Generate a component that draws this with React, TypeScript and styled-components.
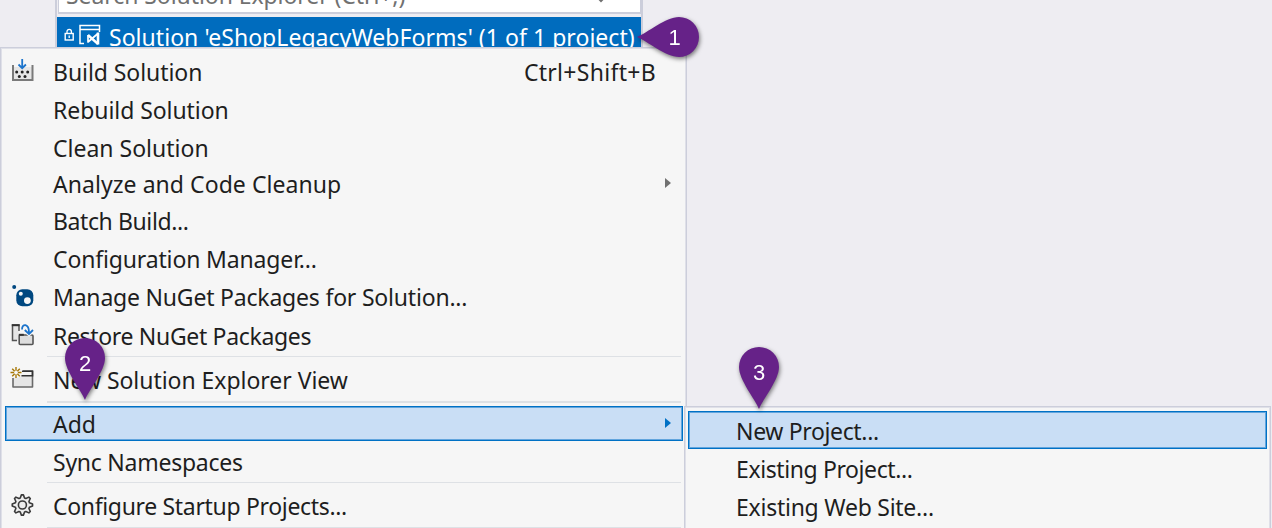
import React from 'react';
import styled, { createGlobalStyle } from 'styled-components';

const Global = createGlobalStyle`
  * { box-sizing: border-box; }
  body { margin: 0; background: #eeedf2; overflow: hidden; }
`;

const Stage = styled.main`
  position: relative;
  width: 1272px;
  height: 528px;
  overflow: hidden;
  background: #eeedf2;
  font-family: 'Noto Sans', 'Open Sans', sans-serif;
  font-size: 23px;
  color: #1e1e1e;
`;

const Explorer = styled.section`
  width: 588px;
  height: 47px;
  margin-left: 55px;
  border: solid #cccedb;
  border-width: 0 2px;
  overflow: hidden;
`;

const Search = styled.div`
  height: 14px;
  display: flex;
  align-items: flex-end;
  justify-content: space-between;
  padding: 0 33px 0 7px;
  margin-left: 1px;
  background: #fff;
  border: solid #cccedb;
  border-width: 0 1px 2px;
  color: #717171;
  line-height: 33px;
`;

const SolutionRow = styled.div`
  height: 41px;
  margin-top: 3px;
  padding-left: 7px;
  display: flex;
  background: #006cbe;
  color: #fff;
`;

const SolutionIcons = styled.svg`
  width: 40px;
  height: 30px;
  flex: none;
`;

const Label = styled.span<{ $ls?: number }>`
  white-space: pre;
  letter-spacing: ${p => p.$ls ?? -0.2}px;
`;

const SolutionLabel = styled(Label)`
  margin-left: 5px;
  line-height: 40px;
`;

const Menu = styled.ul`
  list-style: none;
  width: 687px;
  height: 490px;
  margin: 0;
  padding: 5px 3px 0 4px;
  background: #f6f6f6;
  border: solid #cccedb;
  border-width: 1px 1px 0;
  box-shadow: inset 1px 1px 0 #dfe0e8, inset -1px 0 0 #dfe0e8;
`;

const SubMenu = styled(Menu)`
  position: absolute;
  left: 684px;
  top: 406px;
  width: 587px;
  padding: 4px 3px 0;
`;

const Item = styled.li<{ $h: number; $active?: boolean; $drop?: number }>`
  height: ${p => p.$h}px;
  display: flex;
  align-items: center;
  position: relative;
  padding: ${p => p.$drop ?? 0}px 27px 0 48px;
  background: ${p => (p.$active ? '#c9def5' : 'transparent')};
  box-shadow: ${p => (p.$active ? 'inset 0 0 0 1px #0071c5, inset 0 0 0 2px #62a5dd' : 'none')};
`;

const Shortcut = styled(Label)`
  margin-left: auto;
`;

const Icon = styled.svg`
  position: absolute;
  left: 4px;
  top: 50%;
  width: 26px;
  height: 26px;
  margin-top: -15px;
`;

const Arrow = styled.i<{ $color: string }>`
  position: absolute;
  right: 12px;
  top: 50%;
  margin-top: -6px;
  border: solid transparent;
  border-width: 5px 0 5px 6px;
  border-left-color: ${p => p.$color};
`;

const Rule = styled.li<{ $h?: number; $top?: number; $gap?: number }>`
  height: ${p => p.$h ?? 1}px;
  margin: ${p => p.$top ?? 0}px 2px ${p => p.$gap ?? 0}px 42px;
  background: #dee1e5;
`;

const PinBox = styled.svg<{ $x: number; $y: number }>`
  position: absolute;
  left: ${p => p.$x}px;
  top: ${p => p.$y}px;
  width: 80px;
  height: 80px;
  overflow: visible;
  font-family: 'Liberation Sans', Arial, sans-serif;
  font-size: 22px;
  filter: drop-shadow(1px 2px 2px rgba(0, 0, 0, 0.5));
`;

function Pin({ x, y, n, side }: { x: number; y: number; n: number; side?: boolean }) {
  return (
    <PinBox $x={x - 40} $y={y - 40} viewBox="-40 -40 80 80">
      <path
        transform={side ? 'rotate(90)' : undefined}
        d="M0 42C-4 32-20 13-20 0A20 20 0 0 1 20 0C20 13 4 32 0 42Z"
        fill="#662288"
      />
      <text x={side ? -4.5 : 0} y={side ? 8 : 12.5} textAnchor="middle" fill="#fff">{n}</text>
    </PinBox>
  );
}

const BuildIcon = () => (
  <Icon viewBox="0 0 26 26" fill="none">
    <path d="M4 10h19.500v13H4z" fill="#e6e6e6" />
    <path d="M4 8v15h19.500V8" stroke="#7a7a7a" strokeWidth="2" />
    <path d="M13.200 2v9M9.500 7.500l3.700 3.700 3.700-3.700" stroke="#1c74cc" strokeWidth="1.800" />
    <g fill="#222">
      <circle cx="7.700" cy="15" r="1.500" /><circle cx="13.200" cy="15" r="1.500" /><circle cx="18.700" cy="15" r="1.500" />
      <circle cx="10.300" cy="19.500" r="1.500" /><circle cx="16" cy="19.500" r="1.500" />
    </g>
  </Icon>
);
const NugetIcon = () => (
  <Icon viewBox="0 0 26 26">
    <circle cx="5.200" cy="5" r="2" fill="#004880" />
    <rect x="7.300" y="7.300" width="17" height="17" rx="6" fill="#004880" />
    <circle cx="11.800" cy="11.800" r="2" fill="#f6f6f6" />
    <circle cx="18.400" cy="18.600" r="3.400" fill="#f6f6f6" />
  </Icon>
);
const RestoreIcon = () => (
  <Icon viewBox="0 0 26 26" fill="none">
    <path d="M3.500 4h6v15.500h-6z" fill="#e6e6e6" />
    <path d="M8 19.500H3.500V4h6.500v6" stroke="#555" strokeWidth="1.500" />
    <path d="M2.800 4.200h7.800" stroke="#333" strokeWidth="2" />
    <rect x="10.200" y="14" width="13.800" height="9.500" rx="1" fill="#ddd" stroke="#555" strokeWidth="1.600" />
    <path d="M9.800 13.800h5" stroke="#333" strokeWidth="2" />
    <path d="M13 8.500c0-6.500 7-6 7 3M15.800 9l4.200 4 4-4" stroke="#f6f6f6" strokeWidth="4" />
    <path d="M13 8.500c0-6.500 7-6 7 3M15.800 9l4.200 4 4-4" stroke="#1c74cc" strokeWidth="1.800" />
  </Icon>
);
const WindowIcon = () => (
  <Icon viewBox="0 0 26 26" fill="none">
    <rect x="4" y="11" width="19.500" height="12" fill="#e6e6e6" />
    <path d="M14 7h9.500v16H4v-9" stroke="#6a6a6a" strokeWidth="1.600" strokeLinejoin="round" />
    <path d="M13 7.200h10.500v4.500H12.500" stroke="#333" strokeWidth="1.600" />
    <circle cx="7" cy="8.500" r="5.500" fill="#f6f6f6" />
    <path d="M7 3v11M1.500 8.500h11M3.200 4.700l7.600 7.600M10.800 4.700l-7.600 7.600" stroke="#a77808" strokeWidth="1.400" />
    <circle cx="7" cy="8.500" r="1.900" fill="#f6f6f6" />
  </Icon>
);
const gear = Array.from({ length: 32 }, (_, i) => {
  const a = ((i - 0.5) * Math.PI) / 16;
  const r = i % 4 < 2 ? 10.2 : 7.4;
  return `${13.4 + r * Math.sin(a)},${15 - r * Math.cos(a)}`;
}).join(' ');
const GearIcon = () => (
  <Icon viewBox="0 0 26 26" fill="none" stroke="#3a3a3a" strokeWidth="1.600" strokeLinejoin="round">
    <polygon points={gear} fill="#eee" />
    <circle cx="13.400" cy="15" r="4" />
  </Icon>
);

export default function App() {
  return (
    <Stage>
      <Global />
      <Explorer>
        <Search>
          <Label $ls={-0.07}>Search Solution Explorer (Ctrl+;)</Label>
          <svg width="12" height="14" fill="none" stroke="#717171" strokeWidth="2"><path d="M1 -2L6 3l5-5" /></svg>
        </Search>
        <SolutionRow>
          <SolutionIcons viewBox="0 0 40 30" fill="none" stroke="#fff">
            <rect x="1.200" y="16.500" width="8" height="6.500" strokeWidth="1.400" />
            <path d="M3 16.500v-2a2.200 2.200 0 0 1 4.400 0v2M5.200 18.500v2.500" strokeWidth="1.300" />
            <path d="M20 26.500h-4V8.500h19.500V15M16 12.500h19.500" strokeWidth="1.500" />
            <path d="M24 18v7l10-8.500" strokeWidth="1.700" strokeLinejoin="round" />
            <path d="M24 18l10 9" strokeWidth="2.400" />
            <path d="M34 15.500v12" strokeWidth="2.600" />
          </SolutionIcons>
          <SolutionLabel $ls={0.04}>Solution 'eShopLegacyWebForms' (1 of 1 project)</SolutionLabel>
        </SolutionRow>
      </Explorer>
      <Menu>
        <Item $h={38}><BuildIcon /><Label $ls={-0.06}>Build Solution</Label><Shortcut $ls={0.3}>Ctrl+Shift+B</Shortcut></Item>
        <Item $h={38}><Label $ls={-0.06}>Rebuild Solution</Label></Item>
        <Item $h={37}><Label $ls={0}>Clean Solution</Label></Item>
        <Item $h={36}><Label $ls={0.05}>Analyze and Code Cleanup</Label><Arrow $color="#717171" /></Item>
        <Item $h={38}><Label $ls={-0.4}>Batch Build...</Label></Item>
        <Item $h={38}><Label $ls={-0.15}>Configuration Manager...</Label></Item>
        <Item $h={38}><NugetIcon /><Label>Manage NuGet Packages for Solution...</Label></Item>
        <Item $h={39}><RestoreIcon /><Label $ls={-0.33}>Restore NuGet Packages</Label></Item>
        <Rule $top={1} />
        <Item $h={44} $drop={2}><WindowIcon /><Label $ls={-0.04}>New Solution Explorer View</Label></Item>
        <Rule $h={2} $gap={3} />
        <Item $h={35} $active><Label $ls={0}>Add</Label><Arrow $color="#0071c5" /></Item>
        <Item $h={41}><Label $ls={-0.25}>Sync Namespaces</Label></Item>
        <Rule />
        <Item $h={44} $drop={2}><GearIcon /><Label $ls={-0.33}>Configure Startup Projects...</Label></Item>
        <Rule />
      </Menu>
      <SubMenu>
        <Item $h={38} $drop={2} $active><Label $ls={-0.35}>New Project...</Label></Item>
        <Item $h={38} $drop={2}><Label $ls={-0.4}>Existing Project...</Label></Item>
        <Item $h={38} $drop={2}><Label $ls={-0.25}>Existing Web Site...</Label></Item>
      </SubMenu>
      <Pin x={679} y={37} n={1} side />
      <Pin x={85} y={358} n={2} />
      <Pin x={759} y={367} n={3} />
    </Stage>
  );
}
